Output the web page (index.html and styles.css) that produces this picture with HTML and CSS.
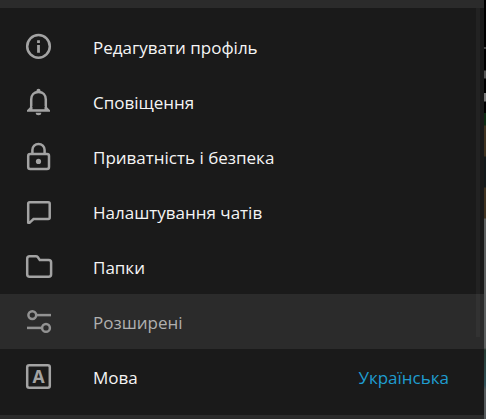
FILE: index.html
```
<!DOCTYPE html>
<html lang="uk">
<head>
    <meta charset="utf-8">
    <title>Налаштування</title>
    <link rel="stylesheet" href="styles.css">
</head>
<body>
  <div class="settings">
    <div class="divider-top"></div>
    <div class="menu">
      <div class="item">
        <svg class="icon" viewBox="0 0 33 33">
          <circle cx="16.5" cy="16.4" r="11.3"/>
          <path class="fill" d="M15.1 10.2h2.8v2.7h-2.8zM15.1 15h2.8v7.8h-2.8z"/>
        </svg>
        <span>Редагувати профіль</span>
      </div>
      <div class="item">
        <svg class="icon" viewBox="0 0 33 33">
          <path d="M9.2 23V14.5C9.2 10 12 7 16.5 7S23.8 10 23.8 14.5V23"/>
          <path class="fill" d="M14.4 7V5.9a2.1 2.1 0 0 1 4.2 0V7zM5 26.8v-1.5l3.2-3.3h16.6l3.2 3.3v1.5zM13.7 27.8h5.6a2.8 2.5 0 0 1-5.6 0z"/>
          <path class="cut" d="M10.5 21h12v3.2h-12z"/>
        </svg>
        <span>Сповіщення</span>
      </div>
      <div class="item">
        <svg class="icon" viewBox="0 0 33 33">
          <rect x="6.2" y="13.9" width="20.8" height="15" rx="2"/>
          <path d="M10.4 13.5V10a6.1 6.1 0 0 1 12.2 0v3.5"/>
          <circle class="fill" cx="16.5" cy="21.4" r="2.6"/>
        </svg>
        <span>Приватність і безпека</span>
      </div>
      <div class="item">
        <svg class="icon" viewBox="0 0 33 33">
          <path d="M6.2 27.7V8.7Q6.2 7.2 7.7 7.2H26.2Q27.7 7.2 27.7 8.7V22.6Q27.7 24.1 26.2 24.1H11.5L8 27.4Q7 28.1 6.2 27.7z"/>
        </svg>
        <span>Налаштування чатів</span>
      </div>
      <div class="item">
        <svg class="icon" viewBox="0 0 33 33">
          <path d="M7.7 6.2H13.8Q15 6.2 15.7 7.1L17.8 10.1H26.6Q29.1 10.1 29.1 12.6V24.3Q29.1 26.8 26.6 26.8H7.7Q5.2 26.8 5.2 24.3V8.7Q5.2 6.2 7.7 6.2z"/>
        </svg>
        <span>Папки</span>
      </div>
      <div class="item active">
        <svg class="icon" viewBox="0 0 33 33">
          <circle cx="10.3" cy="10.1" r="3.9"/>
          <path d="M14.3 10.1H29"/>
          <circle cx="24" cy="22.9" r="3.9"/>
          <path d="M5 22.9H20"/>
        </svg>
        <span>Розширені</span>
      </div>
      <div class="item">
        <svg class="icon" viewBox="0 0 33 33">
          <rect x="5.2" y="5.2" width="22.6" height="22.6" rx="2"/>
          <text x="16.5" y="22.7" text-anchor="middle">A</text>
        </svg>
        <span>Мова</span>
        <span class="value">Українська</span>
      </div>
      <div class="scrollbar"></div>
    </div>
    <div class="divider-bottom"></div>
  </div>
  <div class="backdrop"></div>
</body>
</html>
```

FILE: styles.css
```
body {
    margin: 0;
    display: flex;
    height: 419px;
    overflow: hidden;
    background: #000;
    font-family: "Open Sans", "Noto Sans", sans-serif;
    font-size: 17px;
    color: #f5f5f5;
}

.settings {
    width: 484px;
    display: flex;
    flex-direction: column;
    background: #1a1a1a;
}

.divider-top {
    height: 8px;
    background: #2b2b2b;
}

.divider-bottom {
    height: 4px;
    background: #2b2b2b;
}

.menu {
    position: relative;
    flex: 1;
    padding-top: 11px;
}

.item {
    display: flex;
    align-items: center;
    height: 55px;
    padding: 0 35px 0 22px;
    box-sizing: border-box;
}

.item span {
    padding-top: 2px;
    white-space: nowrap;
}

.item .value {
    margin-left: auto;
    color: #1f9dd0;
}

.active {
    background: #2b2b2b;
    color: #b0b0b0;
}

.icon {
    width: 33px;
    height: 33px;
    margin-right: 38px;
    fill: none;
    stroke: #a3a3a3;
    stroke-width: 2.5;
}

.active .icon {
    stroke: #929292;
}

.icon .fill {
    fill: #a3a3a3;
    stroke: none;
}

.icon .cut {
    fill: #1a1a1a;
    stroke: none;
}

.icon text {
    fill: #a3a3a3;
    stroke: none;
    font-family: "Noto Sans", sans-serif;
    font-weight: bold;
    font-size: 17.5px;
}

.scrollbar {
    position: absolute;
    top: 0;
    right: 4px;
    width: 4px;
    height: 329px;
    background: rgba(255, 255, 255, 0.035);
}

.backdrop {
    width: 2px;
    background: linear-gradient(#000 47px, #444 47px, #444 49px, #000 49px, #000 70px, #555 71px, #555 78px, #000 79px, #000 93px, #777 93px, #777 101px, #000 102px, #000 113px, #0d2a12 113px, #0d2a12 125px, #3e3220 126px, #3e3220 156px, #14191a 157px, #14191a 187px, #3e3220 188px, #3e3220 218px, #5b5e5e 219px, #5b5e5e 348px, #263a32 350px, #305058 385px, #555a5c 390px);
}
```
